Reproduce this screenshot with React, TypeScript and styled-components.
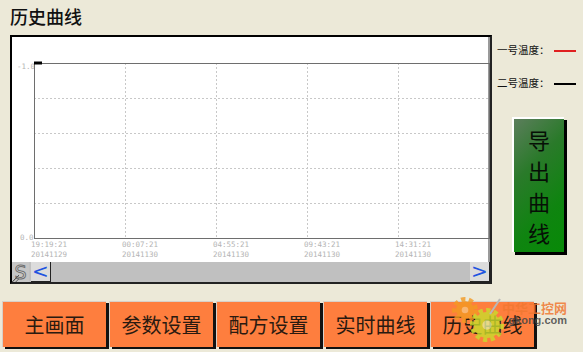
import { createGlobalStyle, styled } from "styled-components";

const GlobalStyle = createGlobalStyle`
  html, body {
    margin: 0;
    padding: 0;
    background: #ece9d8;
  }
  body {
    font-family: "Noto Sans CJK SC", "DejaVu Sans", sans-serif;
  }
`;

const gridX = [22, 113, 204, 295, 386, 477];
const gridY = [26, 61, 96, 131, 166, 201];
const ticks = [
  { time: "19:19:21", date: "20141129" },
  { time: "00:07:21", date: "20141130" },
  { time: "04:55:21", date: "20141130" },
  { time: "09:43:21", date: "20141130" },
  { time: "14:31:21", date: "20141130" },
];
const navButtons = ["主画面", "参数设置", "配方设置", "实时曲线", "历史曲线"];

const Gear = ({ cx, cy, r, color, hub }: { cx: number; cy: number; r: number; color: string; hub: string }) => (
  <g>
    <circle cx={cx} cy={cy} r={r} fill="none" stroke={color} strokeWidth={6} strokeDasharray="4 3.2" />
    <circle cx={cx} cy={cy} r={r - 1} fill={color} />
    <circle cx={cx} cy={cy} r={r / 3} fill={hub} />
  </g>
);

const App = () => {
  return (
    <StScreen>
      <GlobalStyle />
      <StTitle>历史曲线</StTitle>
      <StMain>
        <StChartPanel>
          <StPlot>
            <svg width="478" height="225" viewBox="0 0 478 225">
              {gridX.slice(1, -1).map((x) => (
                <line key={x} x1={x + 0.5} y1={26} x2={x + 0.5} y2={201} stroke="#c8c8c8" strokeDasharray="2 2" />
              ))}
              {gridY.slice(1, -1).map((y) => (
                <line key={y} x1={22} y1={y + 0.5} x2={477} y2={y + 0.5} stroke="#c8c8c8" strokeDasharray="2 2" />
              ))}
              <g fill="#b4b4b4" fontFamily="'DejaVu Sans Mono', monospace" fontSize="7.5">
                <text x={5} y={32}>-1.0</text>
                <text x={8} y={203}>0.0</text>
                {ticks.map((t, i) => (
                  <g key={i}>
                    <text x={gridX[i] - 3} y={210}>{t.time}</text>
                    <text x={gridX[i] - 3} y={220}>{t.date}</text>
                  </g>
                ))}
              </g>
              <rect x={22.5} y={26.5} width={455} height={175} fill="none" stroke="#6e6e6e" />
              <line x1={22} y1={26} x2={30} y2={26} stroke="#000" strokeWidth={3} />
            </svg>
          </StPlot>
          <StScrollBar>
            <StCornerButton>
              S
              <StGrip />
            </StCornerButton>
            <StArrowButton>&lt;</StArrowButton>
            <StTrack />
            <StArrowButton>&gt;</StArrowButton>
          </StScrollBar>
        </StChartPanel>
        <StSide>
          <StLegend>
            <span>一号温度：</span>
            <StSwatch $color="#e02020" />
          </StLegend>
          <StLegend>
            <span>二号温度：</span>
            <StSwatch $color="#000" />
          </StLegend>
          <StExportButton>
            <span>导</span>
            <span>出</span>
            <span>曲</span>
            <span>线</span>
          </StExportButton>
        </StSide>
      </StMain>
      <StNavBar>
        {navButtons.map((label) => (
          <StNavButton key={label}>{label}</StNavButton>
        ))}
      </StNavBar>
      <StWatermark>
        <svg width="60" height="52" viewBox="0 0 60 52">
          <g opacity="0.8">
            <Gear cx={15} cy={16} r={10} color="#f39a22" hub="#f8c47e" />
            <Gear cx={37} cy={31} r={14} color="#c9de2c" hub="#e4ef9a" />
          </g>
          <path d="M40 20 L50 5" stroke="#b8b8b8" strokeWidth="2" />
        </svg>
        <StWatermarkText>
          <b>中华工控网</b>
          <span>gkong.com</span>
        </StWatermarkText>
      </StWatermark>
    </StScreen>
  );
};

export default App;

const StScreen = styled.div`
  position: relative;
  display: flex;
  flex-direction: column;

  width: 583px;
  height: 352px;
  overflow: hidden;

  background: #ece9d8;
`;

const StTitle = styled.h1`
  margin: 0;
  height: 35px;
  padding: 4px 0 0 10px;
  box-sizing: border-box;

  color: #111;
  font-size: 18px;
  font-weight: 500;
  line-height: 24px;
`;

const StMain = styled.div`
  display: flex;
  align-items: flex-start;
`;

const StChartPanel = styled.div`
  display: flex;
  flex-direction: column;

  width: 482px;
  height: 249px;
  margin-left: 10px;

  border-top: 2px solid #000;
  border-left: 2px solid #000;
  border-right: 2px solid #222;
  border-bottom: 2px solid #222;
  box-shadow: inset -2px 0 0 #9a9a9a;
  box-sizing: border-box;
  background: #fff;
`;

const StPlot = styled.div`
  height: 225px;

  & > svg {
    display: block;
  }
`;

const StScrollBar = styled.div`
  display: flex;
  height: 20px;
  background: #c0c0c0;
`;

const StCornerButton = styled.div`
  position: relative;
  width: 17px;
  margin-right: 2px;

  background: #c6c6c6;
  color: #d8d8d8;
  font-family: "DejaVu Sans", sans-serif;
  font-size: 19px;
  line-height: 20px;
  text-align: center;
  -webkit-text-stroke: 1px #707070;
`;

const StGrip = styled.span`
  position: absolute;
  left: 0;
  bottom: 0;

  width: 7px;
  height: 7px;
  background: linear-gradient(135deg, transparent 45%, #555 50%, transparent 60%, transparent 70%, #555 75%, transparent 85%);
`;

const StArrowButton = styled.div`
  width: 20px;

  background: #dcdcdc;
  border-right: 1px solid #222;
  border-bottom: 1px solid #222;
  box-sizing: border-box;
  color: #1f54e0;
  font-family: "DejaVu Sans", sans-serif;
  font-size: 20px;
  line-height: 18px;
  text-align: center;
`;

const StTrack = styled.div`
  flex: 1;
  background: #c0c0c0;
`;

const StSide = styled.div`
  display: flex;
  flex-direction: column;

  width: 91px;
  padding: 8px 0 0 5px;
  box-sizing: border-box;
`;

const StLegend = styled.div`
  display: flex;
  align-items: center;

  height: 14px;
  margin-bottom: 19px;

  color: #111;
  font-size: 10.5px;
  line-height: 14px;
  white-space: nowrap;

  & > span {
    width: 57px;
  }
`;

const StSwatch = styled.i<{ $color: string }>`
  width: 22px;
  height: 2px;
  margin-top: 1px;
  background: ${({ $color }) => $color};
`;

const StExportButton = styled.button`
  display: flex;
  flex-direction: column;
  align-items: center;
  justify-content: center;
  gap: 8px;

  width: 52px;
  height: 135px;
  margin: 8px 0 0 15px;
  padding: 0;

  border: none;
  border-top: 2px solid #fff;
  border-left: 2px solid #fff;
  border-radius: 0;
  box-shadow: 3px 3px 0 #000;
  background: linear-gradient(135deg, #5c7e5c 0%, #2a7a2a 35%, #0f8410 70%, #078a07 100%);
  color: #061006;
  font-family: "Noto Sans CJK SC", sans-serif;
  font-size: 22px;
  line-height: 23px;

  & > span {
    display: block;
    height: 23px;
  }
`;

const StNavBar = styled.div`
  display: flex;
  gap: 3px;

  margin-top: 17px;
  padding-left: 2px;
`;

const StNavButton = styled.button`
  width: 104px;
  height: 46px;
  padding: 0;

  border: none;
  border-top: 1px solid #d8d0c8;
  border-left: 1px solid #d8d0c8;
  border-radius: 0;
  box-shadow: 3px 2px 0 #111;
  background: #fe7e3e;
  color: #2a1a10;
  font-family: "Noto Sans CJK SC", sans-serif;
  font-size: 20px;
  line-height: 44px;
  white-space: nowrap;
`;

const StWatermark = styled.div`
  position: absolute;
  left: 450px;
  top: 294px;

  display: flex;
  align-items: flex-start;
  pointer-events: none;
`;

const StWatermarkText = styled.div`
  display: flex;
  flex-direction: column;
  align-items: flex-end;
  margin: 7px 0 0 -8px;

  & > b {
    color: rgba(240, 120, 50, 0.85);
    font-size: 13px;
    line-height: 13px;
  }
  & > span {
    color: rgba(70, 70, 70, 0.85);
    font-family: "Liberation Sans", sans-serif;
    font-size: 11px;
    font-weight: 700;
    line-height: 12px;
  }
`;
